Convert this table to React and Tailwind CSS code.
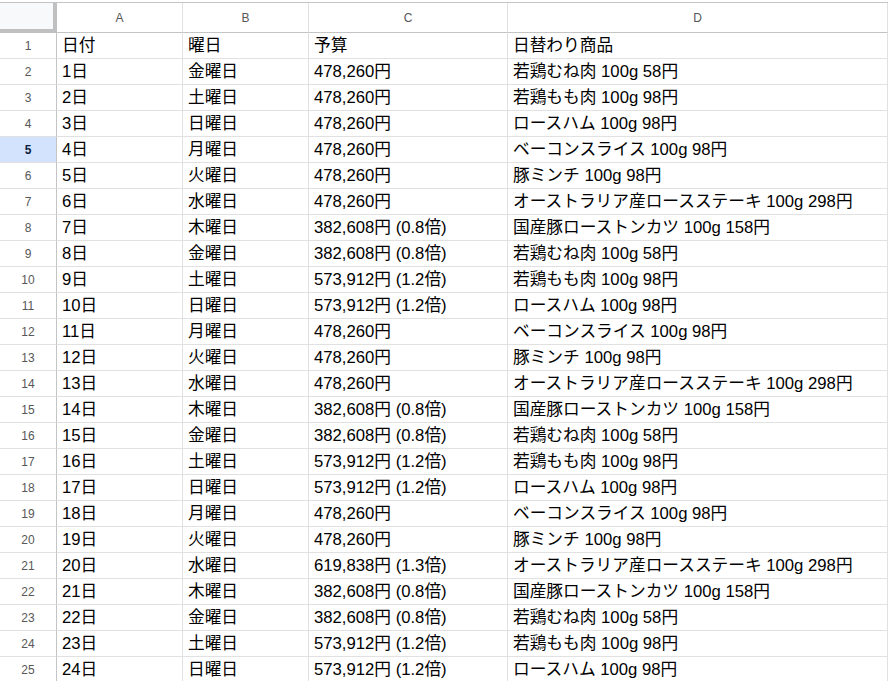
import React from "react";

const budget = {
  n: "478,260円",
  lo: "382,608円 (0.8倍)",
  hi: "573,912円 (1.2倍)",
  xh: "619,838円 (1.3倍)",
};

const days = ["金曜日", "土曜日", "日曜日", "月曜日", "火曜日", "水曜日", "木曜日"];

const items = [
  "若鶏むね肉 100g 58円",
  "若鶏もも肉 100g 98円",
  "ロースハム 100g 98円",
  "ベーコンスライス 100g 98円",
  "豚ミンチ 100g 98円",
  "オーストラリア産ロースステーキ 100g 298円",
  "国産豚ローストンカツ 100g 158円",
];

const budgetByDay = ["lo", "hi", "hi", "n", "n", "n", "lo"];

const rows = [["日付", "曜日", "予算", "日替わり商品"]];
for (let i = 0; i < 24; i++) {
  let b = budget[budgetByDay[i % 7]];
  if (i < 3) b = budget.n;
  if (i === 19) b = budget.xh;
  rows.push([`${i + 1}日`, days[i % 7], b, items[i % 7]]);
}

const font = {
  fontFamily: '"Liberation Sans", Arial, "Noto Sans CJK JP", sans-serif',
};

const App = () => {
  return (
    <div className="w-[888px] h-[681px] overflow-hidden bg-white" style={font}>
      <div className="h-[3px] bg-white border-b border-[#c4c4c4]" />
      <div className="grid grid-cols-[57px_126px_126px_199px_1fr] h-[30px]">
        <div className="bg-[#f8f9fa] border-r-4 border-b-4 border-[#c0c0c0]" />
        {["A", "B", "C", "D"].map((c) => (
          <div
            key={c}
            className="flex items-center justify-center border-r border-b border-[#c4c4c4] border-r-[#e1e1e1] text-[12px] text-[#575757]"
          >
            {c}
          </div>
        ))}
      </div>
      {rows.map((r, i) => (
        <div
          key={i}
          className="grid grid-cols-[57px_126px_126px_199px_1fr] h-[26px]"
        >
          <div
            className={
              i === 4
                ? "flex items-center justify-center border-r border-b border-r-[#c4c4c4] border-b-[#e1e1e1] bg-[#d3e3fd] text-[12px] font-bold text-[#0b1e3d]"
                : "flex items-center justify-center border-r border-b border-r-[#c4c4c4] border-b-[#e1e1e1] text-[12px] text-[#575757]"
            }
          >
            {i + 1}
          </div>
          {r.map((cell, j) => (
            <div
              key={j}
              className="flex items-center pl-[5px] pt-[1px] border-r border-b border-[#e1e1e1] text-[16.7px] text-black whitespace-nowrap overflow-hidden"
            >
              {cell}
            </div>
          ))}
        </div>
      ))}
    </div>
  );
};

export default App;
